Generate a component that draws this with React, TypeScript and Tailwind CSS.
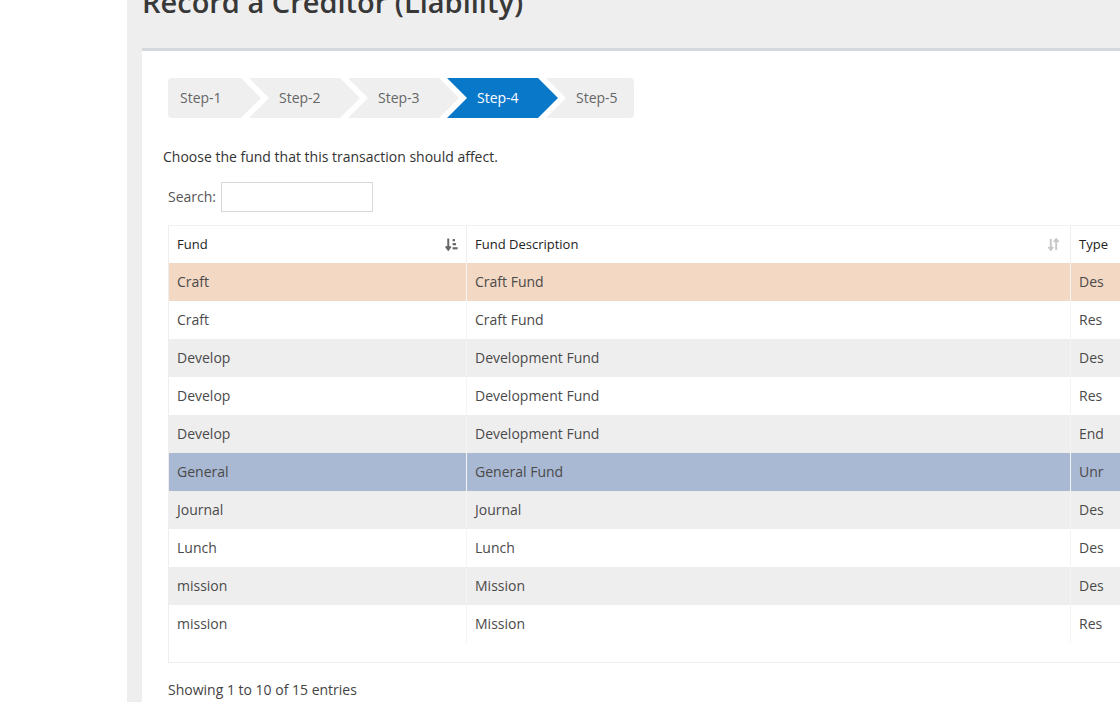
import React from 'react'

const rows = [
  { fund: 'Craft', desc: 'Craft Fund', type: 'Des', tone: 'peach' },
  { fund: 'Craft', desc: 'Craft Fund', type: 'Res', tone: 'white' },
  { fund: 'Develop', desc: 'Development Fund', type: 'Des', tone: 'gray' },
  { fund: 'Develop', desc: 'Development Fund', type: 'Res', tone: 'white' },
  { fund: 'Develop', desc: 'Development Fund', type: 'End', tone: 'gray' },
  { fund: 'General', desc: 'General Fund', type: 'Unr', tone: 'blue' },
  { fund: 'Journal', desc: 'Journal', type: 'Des', tone: 'gray' },
  { fund: 'Lunch', desc: 'Lunch', type: 'Des', tone: 'white' },
  { fund: 'mission', desc: 'Mission', type: 'Des', tone: 'gray' },
  { fund: 'mission', desc: 'Mission', type: 'Res', tone: 'white' },
]

const toneClass: Record<string, string> = {
  peach: 'bg-[#f3d8c3]',
  white: 'bg-white',
  gray: 'bg-[#efeeef]',
  blue: 'bg-[#a9b8d3]',
}

function Steps() {
  return (
    <div className="flex h-[41px] text-sm pt-px">
      <div className="flex items-center w-[93px] -mr-3 pl-3 bg-[#efefef] text-[#666] rounded-l-sm [clip-path:polygon(0_0,73px_0,100%_50%,73px_100%,0_100%)]">
        Step-1
      </div>
      {['Step-2', 'Step-3', 'Step-4'].map(s => (
        <div
          key={s}
          className={
            'flex items-center w-[111px] -mr-3 pl-[30px] [clip-path:polygon(0_0,91px_0,100%_50%,91px_100%,0_100%,20px_50%)] ' +
            (s === 'Step-4' ? 'bg-[#0a78c9] text-white' : 'bg-[#efefef] text-[#666]')
          }
        >
          {s}
        </div>
      ))}
      <div className="flex items-center w-[88px] pl-[30px] bg-[#efefef] text-[#666] rounded-r-sm [clip-path:polygon(0_0,100%_0,100%_100%,0_100%,20px_50%)]">
        Step-5
      </div>
    </div>
  )
}

function SortAsc() {
  return (
    <svg width="13" height="13" viewBox="0 0 12 12" className="text-[#666]">
      <path d="M3 0.5v9.5M0.8 7.8l2.2 3 2.2-3" stroke="currentColor" strokeWidth="1.8" fill="none" />
      <rect x="7" y="1" width="2.2" height="2" fill="currentColor" />
      <rect x="7" y="4.7" width="3.2" height="2" fill="currentColor" />
      <rect x="7" y="8.5" width="4.6" height="2" fill="currentColor" />
    </svg>
  )
}

function SortBoth() {
  return (
    <svg width="13" height="13" viewBox="0 0 12 12" className="text-[#c8c8c8]">
      <path d="M3.5 1v10M1.3 8.3l2.2 2.7 2.2-2.7M8.5 11V1M6.3 3.7l2.2-2.7 2.2 2.7" stroke="currentColor" strokeWidth="1.8" fill="none" />
    </svg>
  )
}

export default function App() {
  return (
    <div className="flex h-[702px] overflow-hidden bg-white font-['Open_Sans',sans-serif] text-[#444]">
      <div className="w-[127px] shrink-0 bg-white" />
      <div className="flex-1 bg-[#efeeef] pl-[15px] min-w-0">
        <h1 className="mt-[-17px] h-[65px] text-[29px] font-semibold leading-[38px] text-[#383838] whitespace-nowrap">
          Record a Creditor (Liability)
        </h1>
        <div className="border-t-[3px] border-[#d4d7dd] bg-white h-[700px] pt-[26px] pl-[26px]">
          <Steps />
          <p className="mt-[29px] -ml-[5px] text-sm text-[#333]">Choose the fund that this transaction should affect.</p>
          <div className="mt-[15px] flex items-center gap-[5px] text-sm text-[#555]">
            <span>Search:</span>
            <input className="w-[152px] h-[30px] border border-[#d8d8d8] bg-white outline-none" />
          </div>
          <div className="mt-[13px] w-[1100px] border-l border-b border-[#eeeeee]">
            <div className="flex h-[38px] border-t border-[#f2f2f2] text-[13px] font-medium text-[#222] bg-white">
              <div className="w-[298px] flex items-center justify-between pl-2 pr-[8px] border-r border-[#eeeeee]">
                <span>Fund</span>
                <SortAsc />
              </div>
              <div className="w-[604px] flex items-center justify-between pl-2 pr-[10px] border-r border-[#eeeeee]">
                <span>Fund Description</span>
                <SortBoth />
              </div>
              <div className="flex-1 flex items-center pl-2">Type</div>
            </div>
            <div className="h-[399px]">
              {rows.map((r, i) => (
                <div key={i} className={'flex h-[38px] text-sm text-[#4a4a4a] ' + toneClass[r.tone]}>
                  <div className="w-[298px] flex items-center pl-2 border-r border-[#f4f4f4]">{r.fund}</div>
                  <div className="w-[604px] flex items-center pl-2 border-r border-[#f4f4f4]">{r.desc}</div>
                  <div className="flex-1 flex items-center pl-2">{r.type}</div>
                </div>
              ))}
            </div>
          </div>
          <p className="mt-[17px] text-sm text-[#444]">Showing 1 to 10 of 15 entries</p>
        </div>
      </div>
    </div>
  )
}
